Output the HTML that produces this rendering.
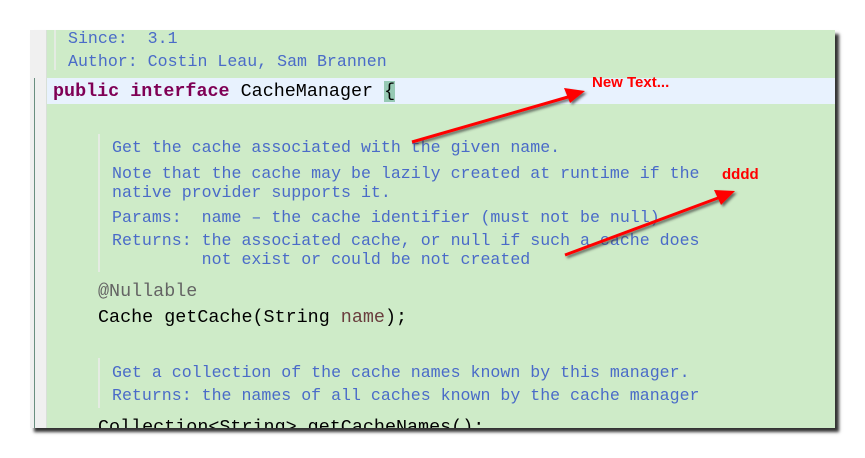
<!DOCTYPE html>
<html><head><style>
body{margin:0;width:865px;height:458px;background:#fff;position:relative;overflow:hidden}
#p{position:absolute;left:30px;top:30px;width:805px;height:398px;background:#ceebc8;overflow:hidden;box-shadow:4px 4px 3px #333}
.g{position:absolute;left:0;top:0;width:16px;height:398px;background:#f0f0f0;border-right:1px solid #d8e0d8}
.gl{position:absolute;left:4px;top:48px;width:1px;height:350px;background:#6a8f80}
.hl{position:absolute;left:17px;top:48px;width:788px;height:26px;background:#e8f2fe}
.t{position:absolute;white-space:pre;font-family:"Liberation Mono",monospace}
.d{font-size:16.6px;color:#4a6bc8}
.c{font-size:18.4px;color:#000}
.k{color:#7f0055;font-weight:bold}
.bl{position:absolute;width:2px;background:#e4ebe2}
.a{position:absolute;font-family:"Liberation Sans",sans-serif;font-weight:bold;color:#f00;font-size:15px}
</style></head><body>
<div id="p">
<div class="g"></div><div class="gl"></div>
<div class="hl"></div>
<div class="bl" style="left:24px;top:0;height:40px"></div>
<div class="bl" style="left:68px;top:104px;height:138px"></div>
<div class="bl" style="left:68px;top:328px;height:50px"></div>
<div class="t d" style="left:38px;top:-1px">Since:  3.1</div>
<div class="t d" style="left:38px;top:22px">Author: Costin Leau, Sam Brannen</div>
<div class="t c" style="left:23px;top:51px"><span class="k">public interface</span> CacheManager <span style="background:#96c9b4">{</span></div>
<div class="t d" style="left:82px;top:108px">Get the cache associated with the given name.</div>
<div class="t d" style="left:82px;top:134px">Note that the cache may be lazily created at runtime if the
native provider supports it.</div>
<div class="t d" style="left:82px;top:178px">Params:  name – the cache identifier (must not be null)</div>
<div class="t d" style="left:82px;top:201px">Returns: the associated cache, or null if such a cache does
         not exist or could be not created</div>
<div class="t c" style="left:68px;top:251px;color:#646464">@Nullable</div>
<div class="t c" style="left:68px;top:277px">Cache getCache(String <span style="color:#6a3e3e">name</span>);</div>
<div class="t d" style="left:82px;top:333px">Get a collection of the cache names known by this manager.</div>
<div class="t d" style="left:82px;top:356px">Returns: the names of all caches known by the cache manager</div>
<div class="t c" style="left:68px;top:387px">Collection&lt;String&gt; getCacheNames();</div>
</div>
<svg style="position:absolute;left:0;top:0" width="865" height="458">
<defs><filter id="s"><feDropShadow dx="2" dy="2" stdDeviation="1.2" flood-color="#333" flood-opacity="0.7"/></filter></defs>
<g filter="url(#s)" fill="#f00" stroke="#f00">
<line x1="412" y1="142" x2="568" y2="97" stroke-width="3"/>
<polygon points="585,91 564,88 570,103" stroke="none"/>
<line x1="565" y1="255" x2="718" y2="198" stroke-width="3"/>
<polygon points="735,191 714,190 721,205" stroke="none"/>
</g></svg>
<div class="a" style="left:592px;top:74px">New Text...</div>
<div class="a" style="left:722px;top:166px">dddd</div>
</body></html>
